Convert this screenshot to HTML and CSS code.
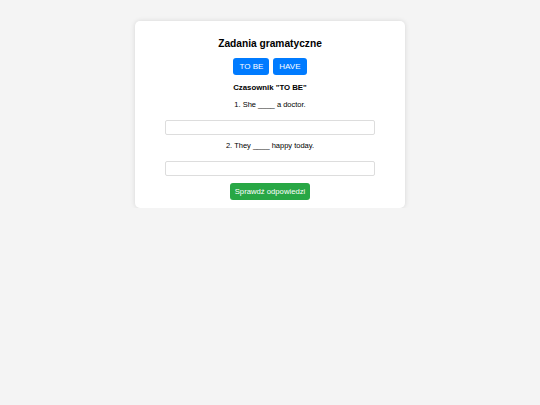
FILE: index.html
```html
<!DOCTYPE html>
<html lang="pl">
<head>
  <meta charset="UTF-8">
  <meta name="viewport" content="width=device-width, initial-scale=1.0">
  <title>Zadania gramatyczne</title>
  <link rel="stylesheet" href="styles.css">
</head>
<body>

  <div class="container">
    <h1>Zadania gramatyczne</h1>

    <div class="tabs">
      <button class="tab-btn" id="tobe-btn">TO BE</button>
      <button class="tab-btn" id="have-btn">HAVE</button>
    </div>

    <div class="exercise">
      <h2>Czasownik "TO BE"</h2>

      <p class="question">1. She ____ a doctor.</p>
      <input type="text" class="answer">

      <p class="question">2. They ____ happy today.</p>
      <input type="text" class="answer">

      <button class="check-btn">Sprawdź odpowiedzi</button>
    </div>
  </div>

</body>
</html>
```

FILE: styles.css
```css
body {
  background-color: #F4F4F4;
  font-family: "Liberation Sans", Arial, sans-serif;
  margin: 0;
  padding: 21px 0 0;
  color: #000;
}

.container {
  background-color: #FFF;
  width: 270px;
  margin: 0 auto;
  padding: 16px 0 8px;
  border-radius: 5px;
  box-shadow: 0 0 5px rgba(0, 0, 0, 0.12);
  text-align: center;
}

h1 {
  font-size: 10.2px;
  line-height: 14px;
  margin: 0 0 7px;
}

.tabs {
  display: flex;
  justify-content: center;
  gap: 4px;
}

.tab-btn {
  background-color: #007BFF;
  color: #FFF;
  border: none;
  border-radius: 3px;
  font-family: inherit;
  font-size: 8px;
  height: 17px;
  padding: 0 6px;
  cursor: pointer;
}

h2 {
  font-size: 7.8px;
  line-height: 10px;
  margin: 8px 0 7px;
}

.question {
  font-size: 7.5px;
  line-height: 10px;
  margin: 0 0 10px;
}

.answer {
  display: block;
  box-sizing: border-box;
  width: 210px;
  height: 15px;
  margin: 0 auto 6px;
  border: 1px solid #DDD;
  border-radius: 2px;
  padding: 0 4px;
}

.check-btn {
  display: block;
  margin: 7px auto 0;
  background-color: #28A745;
  color: #FFF;
  border: none;
  border-radius: 3px;
  font-family: inherit;
  font-size: 7.7px;
  height: 17px;
  padding: 0 5px;
  cursor: pointer;
}
```
